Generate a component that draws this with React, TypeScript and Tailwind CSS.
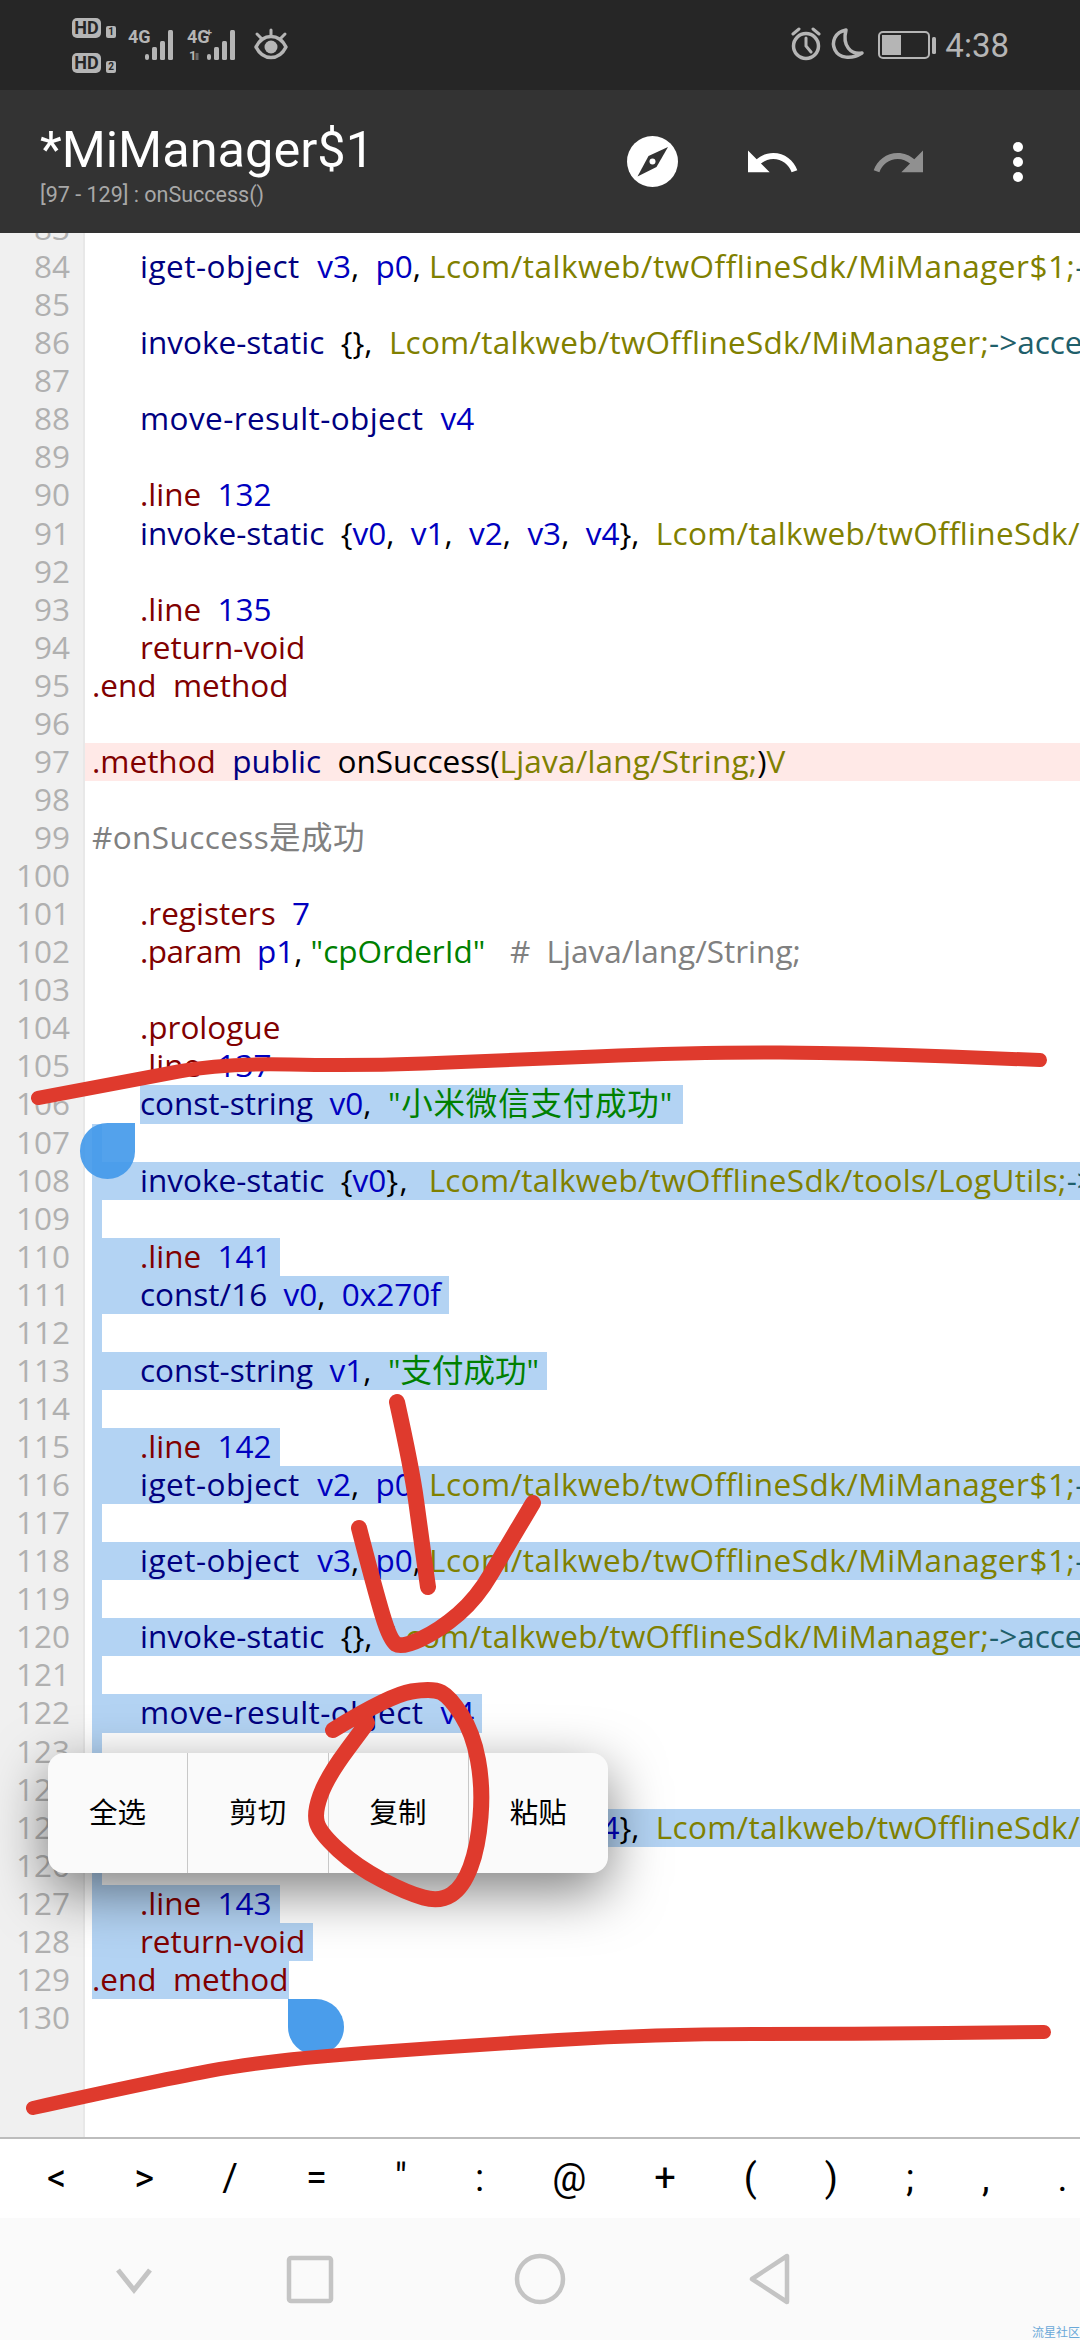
import React from "react";

const c = {
  op: "text-[#000080]",
  reg: "text-[#0000c0]",
  dir: "text-[#800000]",
  type: "text-[#808000]",
  str: "text-[#008000]",
  note: "text-[#808080]",
  plain: "text-black",
  arrow: "text-[#1f5f6b]",
};

type Tok = [string, string];
type Line = { n: number; indent?: boolean; toks?: Tok[]; sel?: boolean; selTextOnly?: boolean; active?: boolean };

const sdk = "Lcom/talkweb/twOfflineSdk/";

const igetLine = (r: string): Tok[] => [
  ["iget-object  ", `${c.op} tracking-[0.5px]`], [r, c.reg], [",  ", c.plain], ["p0", c.reg], [", ", c.plain],
  [sdk + "MiManager$1;", `${c.type} tracking-[0.5px]`], ["->access$000", c.arrow],
];
const accessLine: Tok[] = [
  ["invoke-static  ", c.op], ["{},  ", c.plain], [sdk + "MiManager;", `${c.type} tracking-[0.25px]`], ["->access$100", c.arrow],
];
const moveLine: Tok[] = [["move-result-object  ", `${c.op} tracking-[0.4px]`], ["v4", c.reg]];
const bigInvoke: Tok[] = [
  ["invoke-static  ", c.op], ["{", c.plain], ["v0", c.reg], [",  ", c.plain], ["v1", c.reg], [",  ", c.plain],
  ["v2", c.reg], [",  ", c.plain], ["v3", c.reg], [",  ", c.plain], ["v4", c.reg], ["},  ", c.plain],
  [sdk + "tools/Result;", `${c.type} tracking-[0.3px]`],
];
const dotLine = (num: string): Tok[] => [[".line  ", c.dir], [num, c.reg]];
const ret: Tok[] = [["return-void", c.dir]];
const endM: Tok[] = [[".end  method", c.dir]];

const lines: Line[] = [
  { n: 83 },
  { n: 84, indent: true, toks: igetLine("v3") },
  { n: 85 },
  { n: 86, indent: true, toks: accessLine },
  { n: 87 },
  { n: 88, indent: true, toks: moveLine },
  { n: 89 },
  { n: 90, indent: true, toks: dotLine("132") },
  { n: 91, indent: true, toks: bigInvoke },
  { n: 92 },
  { n: 93, indent: true, toks: dotLine("135") },
  { n: 94, indent: true, toks: ret },
  { n: 95, toks: endM },
  { n: 96 },
  {
    n: 97,
    active: true,
    toks: [[".method  ", c.dir], ["public  ", c.op], ["onSuccess(", c.plain], ["Ljava/lang/String;", `${c.type} tracking-[0.2px]`], [")", c.plain], ["V", c.type]],
  },
  { n: 98 },
  { n: 99, toks: [["#onSuccess是成功", `${c.note} tracking-[0.4px]`]] },
  { n: 100 },
  { n: 101, indent: true, toks: [[".registers  ", c.dir], ["7", c.reg]] },
  {
    n: 102,
    indent: true,
    toks: [[".param  ", `${c.dir} tracking-[-0.5px]`], ["p1", c.reg], [", ", c.plain], ['"cpOrderId"', c.str], ["   #  Ljava/lang/String;", c.note]],
  },
  { n: 103 },
  { n: 104, indent: true, toks: [[".prologue", c.dir]] },
  { n: 105, indent: true, toks: dotLine("137") },
  {
    n: 106,
    indent: true,
    selTextOnly: true,
    toks: [["const-string  ", c.op], ["v0", c.reg], [",  ", c.plain], ['"小米微信支付成功"', `${c.str} tracking-[0.8px]`]],
  },
  { n: 107, sel: true },
  {
    n: 108,
    sel: true,
    indent: true,
    toks: [["invoke-static  ", c.op], ["{", c.plain], ["v0", c.reg], ["},  ", `${c.plain} tracking-[1.5px]`], [sdk + "tools/LogUtils;", `${c.type} tracking-[0.3px]`], ["->d(Ljava/lang/String;)V", c.arrow]],
  },
  { n: 109, sel: true },
  { n: 110, sel: true, indent: true, toks: dotLine("141") },
  { n: 111, sel: true, indent: true, toks: [["const/16  ", c.op], ["v0", c.reg], [",  ", c.plain], ["0x270f", c.reg]] },
  { n: 112, sel: true },
  { n: 113, sel: true, indent: true, toks: [["const-string  ", c.op], ["v1", c.reg], [",  ", c.plain], ['"支付成功"', c.str]] },
  { n: 114, sel: true },
  { n: 115, sel: true, indent: true, toks: dotLine("142") },
  { n: 116, sel: true, indent: true, toks: igetLine("v2") },
  { n: 117, sel: true },
  { n: 118, sel: true, indent: true, toks: igetLine("v3") },
  { n: 119, sel: true },
  { n: 120, sel: true, indent: true, toks: accessLine },
  { n: 121, sel: true },
  { n: 122, sel: true, indent: true, toks: moveLine },
  { n: 123, sel: true },
  { n: 124, sel: true, indent: true, toks: dotLine("144") },
  { n: 125, sel: true, indent: true, toks: bigInvoke },
  { n: 126, sel: true },
  { n: 127, sel: true, indent: true, toks: dotLine("143") },
  { n: 128, sel: true, indent: true, toks: ret },
  { n: 129, sel: true, toks: endM },
  { n: 130 },
];

function CodeRow({ line }: { line: Line }) {
  const text = line.toks?.map((t, i) => (
    <span key={i} className={t[1]}>{t[0]}</span>
  ));
  return (
    <div className={`h-[38.07px] pl-[7px] leading-[36px] whitespace-pre ${line.active ? "bg-[#ffe9e7]" : ""}`}>
      {line.sel ? (
        <span className={`inline-block h-[38.07px] min-w-[10px] bg-[#b3d3f3] align-top ${line.indent ? "pl-[48px] pr-[8px]" : ""}`}>{text}</span>
      ) : line.selTextOnly ? (
        <span className="inline-block h-[38.07px] ml-[48px] pr-[10px] bg-[#b3d3f3] align-top">{text}</span>
      ) : (
        <span className={`inline-block align-top ${line.indent ? "pl-[48px]" : ""}`}>{text}</span>
      )}
    </div>
  );
}

// red marker strokes
function smooth(p: number[][]) {
  let d = `M${p[0][0]} ${p[0][1]}`;
  for (let i = 1; i < p.length - 1; i++) {
    const mx = (p[i][0] + p[i + 1][0]) / 2;
    const my = (p[i][1] + p[i + 1][1]) / 2;
    d += ` Q${p[i][0]} ${p[i][1]} ${mx} ${my}`;
  }
  const l = p[p.length - 1];
  return d + ` L${l[0]} ${l[1]}`;
}

const lineStrokes: number[][][] = [
  [[38, 1098], [134, 1080], [223, 1063], [357, 1066], [491, 1061], [700, 1052], [860, 1053], [1040, 1060]],
  [[33, 2108], [150, 2082], [268, 2060], [460, 2046], [656, 2034], [850, 2034], [1044, 2032]],
];
const penStrokes: number[][][] = [
  [[397, 1402], [412, 1470], [420, 1530], [428, 1587]],
  [[359, 1528], [375, 1590], [390, 1640], [402, 1648], [440, 1630], [477, 1598], [505, 1550], [533, 1503]],
  [
    [333, 1730], [390, 1695], [433, 1688], [450, 1697], [473, 1733], [483, 1787], [478, 1847], [463, 1887],
    [440, 1902], [407, 1893], [357, 1867], [320, 1833], [314, 1813], [327, 1777], [367, 1723],
  ],
];

function Bars({ x }: { x: number }) {
  return (
    <g fill="#b5b5b5">
      <rect x={x} y="54" width="4" height="6" rx="2" />
      <rect x={x + 7} y="47" width="5" height="13" rx="1.5" />
      <rect x={x + 15} y="41" width="5" height="19" rx="1.5" />
      <rect x={x + 23} y="30" width="5" height="30" rx="1.5" />
    </g>
  );
}

function HdBadge({ num }: { num: string }) {
  return (
    <div className="flex items-end gap-[5px]">
      <span className="flex h-[20px] w-[29px] items-center justify-center rounded-[5px] bg-[#b5b5b5] text-[18px] leading-none font-bold text-[#262626]">HD</span>
      <span className="flex h-[12px] w-[10px] items-center justify-center rounded-[2px] bg-[#b5b5b5] text-[10px] leading-none font-bold text-[#262626]">{num}</span>
    </div>
  );
}

function StatusBar() {
  return (
    <div className="flex h-[90px] shrink-0 items-center justify-between bg-[#262626] pl-[72px] pr-[71px] text-[#b5b5b5]">
      <div className="flex items-center">
        <div className="flex flex-col gap-[15px] pt-[1px]">
          <HdBadge num="1" />
          <HdBadge num="2" />
        </div>
        <div className="relative ml-[12px] h-[90px] w-[160px]">
          <span className="absolute left-0 top-[28px] text-[18px] leading-[18px] font-bold">4G</span>
          <svg className="absolute left-0 top-0" width="160" height="90" viewBox="0 0 160 90">
            <Bars x={17} />
            <Bars x={79} />
            <path d="M69 53v7" stroke="#666" strokeWidth="3" />
            <g transform="translate(126 29)" fill="none" stroke="#b5b5b5">
              <path d="M2 18C9 4 25 4 32 18C25 32 9 32 2 18Z" strokeWidth="3.5" strokeLinejoin="round" />
              <circle cx="17" cy="18" r="6.5" fill="#b5b5b5" stroke="none" />
              <path d="M17 1V6M3 5L8 10M31 5L26 10" strokeWidth="3" strokeLinecap="round" />
            </g>
          </svg>
          <span className="absolute left-[59px] top-[28px] text-[18px] leading-[18px] font-bold">4G</span>
          <span className="absolute left-[78px] top-[27px] text-[11px] leading-[11px] font-bold">+</span>
          <span className="absolute left-[61px] top-[49px] text-[13px] leading-[13px] font-bold">1</span>
        </div>
      </div>
      <div className="flex items-center">
        <svg width="145" height="40" viewBox="0 0 145 40" fill="none" stroke="#b5b5b5">
          <circle cx="15" cy="21" r="12.5" strokeWidth="3.5" />
          <path d="M15 13V21L20 27M2 9L8 4M28 9L22 4" strokeWidth="3" strokeLinecap="round" />
          <path d="M55 5C44 7 40 17 44 25C48 33 60 35 71 28C60 30 51 21 55 5Z" strokeWidth="3.5" strokeLinejoin="round" />
          <rect x="88" y="7" width="50" height="26" rx="4" strokeWidth="2" />
          <rect x="91" y="10" width="19" height="20" fill="#b5b5b5" stroke="none" />
          <rect x="141" y="12" width="4" height="17" rx="1.5" fill="#b5b5b5" stroke="none" />
        </svg>
        <span className="ml-[9px] text-[33px] leading-none">4:38</span>
      </div>
    </div>
  );
}

function Toolbar() {
  return (
    <div className="flex h-[143px] shrink-0 items-center justify-between bg-[#333333] pl-[40px] pr-[1px]">
      <div className="flex flex-col pt-[7px]">
        <span className="text-[50.5px] leading-[56px] text-white">*MiManager$1</span>
        <span className="mt-[4px] text-[21.5px] leading-[26px] text-[#a8a8a8]">[97 - 129] : onSuccess()</span>
      </div>
      <div className="flex">
        <div className="flex w-[122px] justify-center">
          <svg width="51" height="51" viewBox="0 0 51 51">
            <circle cx="25.5" cy="25.5" r="25.5" fill="#fff" />
            <path d="M41 11L29.5 31L10.5 40.5L21.5 20Z" fill="#333" />
            <circle cx="25.5" cy="25.5" r="3" fill="#fff" />
          </svg>
        </div>
        <div className="flex w-[122px] items-center justify-center">
          <svg width="53" height="24" viewBox="2 7 22 9.5" fill="#fff">
            <path d="M12.5 8c-2.65 0-5.05.99-6.9 2.6L2 7v9h9l-3.62-3.62c1.39-1.16 3.16-1.88 5.12-1.88 3.54 0 6.55 2.31 7.6 5.5l2.37-.78C21.08 11.03 17.15 8 12.5 8z" />
          </svg>
        </div>
        <div className="flex w-[122px] items-center justify-center">
          <svg width="53" height="24" viewBox="0 7 22 9.5" fill="#909090">
            <path d="M18.4 10.6C16.55 8.99 14.15 8 11.5 8c-4.65 0-8.58 3.03-9.96 7.22L3.9 16c1.05-3.19 4.05-5.5 7.6-5.5 1.95 0 3.73.72 5.12 1.88L13 16h9V7l-3.6 3.6z" />
          </svg>
        </div>
        <div className="flex w-[122px] flex-col items-center justify-center gap-[5px]">
          <span className="h-[10px] w-[10px] rounded-full bg-white" />
          <span className="h-[10px] w-[10px] rounded-full bg-white" />
          <span className="h-[10px] w-[10px] rounded-full bg-white" />
        </div>
      </div>
    </div>
  );
}

export default function App() {
  const symbols = ["<", ">", "/", "=", '"', ":", "@", "+", "(", ")", ";", ",", "."];
  return (
    <div className="relative flex h-[2340px] w-[1080px] flex-col overflow-hidden bg-white font-['Roboto','Noto_Sans_CJK_SC',sans-serif]">
      <StatusBar />
      <Toolbar />

      <div className="relative flex h-[1904px] overflow-hidden text-[31.5px] font-['Open_Sans','Noto_Sans_CJK_SC',sans-serif]">
        <div className="w-[85px] shrink-0 border-r-2 border-[#e8e8e8] bg-[#f0f0f0]">
          <div className="-mt-[23px] pr-[13px] text-right text-[#b0b0b0]">
            {lines.map((l) => (
              <div key={l.n} className="h-[38.07px] leading-[36px]">{l.n}</div>
            ))}
          </div>
        </div>
        <div className="min-w-0 flex-1">
          <div className="-mt-[23px]">
            {lines.map((l) => (
              <CodeRow key={l.n} line={l} />
            ))}
          </div>
        </div>
      </div>

      <div className="flex h-[81px] shrink-0 items-center overflow-hidden border-t-2 border-[#bdbdbd] bg-white pl-[13px] text-[38px] text-black">
        {symbols.map((s, i) => (
          <span key={i} className="px-[34px]">{s}</span>
        ))}
      </div>

      <div className="relative flex h-[122px] shrink-0 items-center bg-[#fafafa]">
        <svg width="1080" height="122" viewBox="0 0 1080 122" fill="none" stroke="#c4c4c4" strokeWidth="4.5">
          <path d="M118 52L134 72L150 52" strokeWidth="5" />
          <rect x="289" y="40" width="42" height="43" rx="2" />
          <circle cx="540" cy="61" r="23" />
          <path d="M787 38V84L752 61Z" strokeLinejoin="round" />
        </svg>
        <span className="absolute bottom-0 right-0 text-[12px] leading-[14px] text-[#6aa8d8]">流星社区</span>
      </div>

      {/* selection handles */}
      <div className="absolute left-[80px] top-[1123px] h-[56px] w-[55px] rounded-b-full rounded-tl-full bg-[#4098ea]/90" />
      <div className="absolute left-[288px] top-[1999px] h-[56px] w-[56px] rounded-b-full rounded-tr-full bg-[#4098ea]/95" />

      {/* floating text menu */}
      <div className="absolute left-[48px] top-[1753px] flex h-[120px] w-[560px] rounded-[16px] bg-[#fafafa] text-[28.5px] text-black shadow-[0_18px_55px_rgba(0,0,0,0.5)]">
        {["全选", "剪切", "复制", "粘贴"].map((t, i) => (
          <div key={t} className={`flex flex-1 items-center justify-center pt-[3px] ${i > 0 ? "border-l border-[#c8c8c8]" : ""}`}>{t}</div>
        ))}
      </div>

      <svg className="pointer-events-none absolute left-0 top-0" width="1080" height="2340" viewBox="0 0 1080 2340" fill="none" stroke="#df3a2d" strokeLinecap="round" strokeLinejoin="round">
        {lineStrokes.map((s, i) => (
          <path key={i} d={smooth(s)} strokeWidth="14" />
        ))}
        {penStrokes.map((s, i) => (
          <path key={i} d={smooth(s)} strokeWidth="16" />
        ))}
      </svg>
    </div>
  );
}
